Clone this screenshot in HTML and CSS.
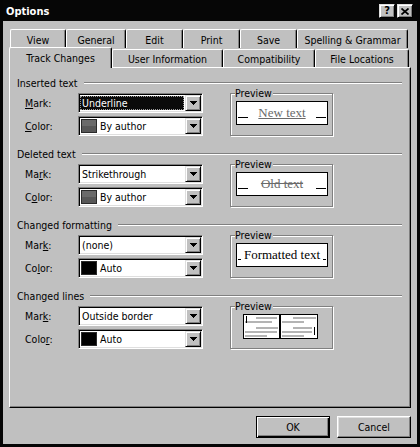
FILE: index.html
```html
<!DOCTYPE html>
<html>
<head>
<meta charset="utf-8">
<title>Options</title>
<link rel="stylesheet" href="styles.css">
</head>
<body>
<div class="window">
  <div class="titlebar">
    <span class="title">Options</span>
    <div class="caption-buttons">
      <span class="cap-btn">?</span>
      <span class="cap-btn"><svg width="8" height="7" viewBox="0 0 8 7"><path d="M0.5 0.5 L7.5 6.5 M7.5 0.5 L0.5 6.5" stroke="#000" stroke-width="1.7" fill="none"/></svg></span>
    </div>
  </div>
  <div class="client">
    <div class="tabstrip">
      <div class="tabrow back">
        <div class="tab">View</div>
        <div class="tab">General</div>
        <div class="tab">Edit</div>
        <div class="tab">Print</div>
        <div class="tab">Save</div>
        <div class="tab">Spelling &amp; Grammar</div>
      </div>
      <div class="tabrow front">
        <div class="tab active">Track Changes</div>
        <div class="tab">User Information</div>
        <div class="tab">Compatibility</div>
        <div class="tab">File Locations</div>
      </div>
    </div>

    <div class="panel">
      <section class="group">
        <div class="group-head"><span>Inserted text</span><span class="etch"></span></div>
        <div class="group-body">
          <div class="fields">
            <span class="lbl"><u>M</u>ark:</span>
            <div class="combo"><span class="value focused">Underline</span><span class="drop"><svg width="7" height="4"><rect x="0" y="0" width="7" height="1"/><rect x="1" y="1" width="5" height="1"/><rect x="2" y="2" width="3" height="1"/><rect x="3" y="3" width="1" height="1"/></svg></span></div>
            <span class="lbl"><u>C</u>olor:</span>
            <div class="combo"><span class="swatch author"></span><span class="value">By author</span><span class="drop"><svg width="7" height="4"><rect x="0" y="0" width="7" height="1"/><rect x="1" y="1" width="5" height="1"/><rect x="2" y="2" width="3" height="1"/><rect x="3" y="3" width="1" height="1"/></svg></span></div>
          </div>
          <div class="preview">
            <span class="preview-label">Preview</span>
            <div class="sample"><span class="tick"></span><span class="new-text">New text</span><span class="tick"></span></div>
          </div>
        </div>
      </section>

      <section class="group">
        <div class="group-head"><span>Deleted text</span><span class="etch"></span></div>
        <div class="group-body">
          <div class="fields">
            <span class="lbl">Ma<u>r</u>k:</span>
            <div class="combo"><span class="value">Strikethrough</span><span class="drop"><svg width="7" height="4"><rect x="0" y="0" width="7" height="1"/><rect x="1" y="1" width="5" height="1"/><rect x="2" y="2" width="3" height="1"/><rect x="3" y="3" width="1" height="1"/></svg></span></div>
            <span class="lbl">C<u>o</u>lor:</span>
            <div class="combo"><span class="swatch author"></span><span class="value">By author</span><span class="drop"><svg width="7" height="4"><rect x="0" y="0" width="7" height="1"/><rect x="1" y="1" width="5" height="1"/><rect x="2" y="2" width="3" height="1"/><rect x="3" y="3" width="1" height="1"/></svg></span></div>
          </div>
          <div class="preview">
            <span class="preview-label">Preview</span>
            <div class="sample"><span class="tick"></span><span class="old-text">Old text</span><span class="tick"></span></div>
          </div>
        </div>
      </section>

      <section class="group">
        <div class="group-head"><span>Changed formatting</span><span class="etch"></span></div>
        <div class="group-body">
          <div class="fields">
            <span class="lbl">Mar<u>k</u>:</span>
            <div class="combo"><span class="value">(none)</span><span class="drop"><svg width="7" height="4"><rect x="0" y="0" width="7" height="1"/><rect x="1" y="1" width="5" height="1"/><rect x="2" y="2" width="3" height="1"/><rect x="3" y="3" width="1" height="1"/></svg></span></div>
            <span class="lbl">Co<u>l</u>or:</span>
            <div class="combo"><span class="swatch auto"></span><span class="value">Auto</span><span class="drop"><svg width="7" height="4"><rect x="0" y="0" width="7" height="1"/><rect x="1" y="1" width="5" height="1"/><rect x="2" y="2" width="3" height="1"/><rect x="3" y="3" width="1" height="1"/></svg></span></div>
          </div>
          <div class="preview">
            <span class="preview-label">Preview</span>
            <div class="sample"><span class="tick short"></span><span class="fmt-text">Formatted text</span><span class="tick short"></span></div>
          </div>
        </div>
      </section>

      <section class="group">
        <div class="group-head"><span>Changed lines</span><span class="etch"></span></div>
        <div class="group-body">
          <div class="fields">
            <span class="lbl">Mar<u>k</u>:</span>
            <div class="combo"><span class="value">Outside border</span><span class="drop"><svg width="7" height="4"><rect x="0" y="0" width="7" height="1"/><rect x="1" y="1" width="5" height="1"/><rect x="2" y="2" width="3" height="1"/><rect x="3" y="3" width="1" height="1"/></svg></span></div>
            <span class="lbl">Colo<u>r</u>:</span>
            <div class="combo"><span class="swatch auto"></span><span class="value">Auto</span><span class="drop"><svg width="7" height="4"><rect x="0" y="0" width="7" height="1"/><rect x="1" y="1" width="5" height="1"/><rect x="2" y="2" width="3" height="1"/><rect x="3" y="3" width="1" height="1"/></svg></span></div>
          </div>
          <div class="preview centered">
            <span class="preview-label">Preview</span>
            <svg class="pages" width="75" height="25" viewBox="0 0 75 25">
              <rect x="0" y="0" width="75" height="25" fill="#fff"/>
              <g fill="#b4b4b4">
                <rect x="13" y="3" width="21" height="2"/>
                <rect x="2" y="7" width="27" height="2"/>
                <rect x="13" y="13" width="22" height="2"/>
                <rect x="2" y="17" width="32" height="2"/>
                <rect x="2" y="21" width="22" height="2"/>
                <rect x="50" y="3" width="23" height="2"/>
                <rect x="39" y="7" width="22" height="2"/>
                <rect x="50" y="13" width="19" height="2"/>
                <rect x="39" y="17" width="30" height="2"/>
                <rect x="39" y="21" width="22" height="2"/>
              </g>
              <rect x="3" y="2" width="1" height="7" fill="#000"/>
              <rect x="71" y="13" width="1" height="8" fill="#000"/>
              <rect x="36" y="0" width="2" height="25" fill="#000"/>
              <rect x="0.5" y="0.5" width="74" height="24" fill="none" stroke="#000"/>
            </svg>
          </div>
        </div>
      </section>
    </div>

    <div class="buttons">
      <button class="btn default">OK</button>
      <button class="btn">Cancel</button>
    </div>
  </div>
</div>
</body>
</html>
```
FILE: styles.css
```css
* { box-sizing: border-box; }

html, body {
  margin: 0;
  padding: 0;
}

body {
  width: 420px;
  height: 447px;
  background: #c0c0c0;
  font-family: "DejaVu Sans Condensed", "DejaVu Sans", sans-serif;
  font-stretch: condensed;
  font-size: 10.5px;
  color: #000;
}

.window {
  width: 420px;
  height: 447px;
  border: 3px solid #050505;
  border-top: 0;
  display: flex;
  flex-direction: column;
  background: #c0c0c0;
}

/* title bar */
.titlebar {
  height: 21px;
  flex: none;
  background: #060606;
  color: #fff;
  display: flex;
  align-items: center;
  justify-content: space-between;
  padding: 1px 4px 0 3px;
}

.title {
  font-weight: bold;
  font-size: 11px;
}

.caption-buttons {
  display: flex;
  gap: 2px;
}

.cap-btn {
  width: 16px;
  height: 14px;
  background: #c0c0c0;
  border: 1px solid;
  border-color: #dfdfdf #000 #000 #dfdfdf;
  box-shadow: inset 1px 1px 0 #fff, inset -1px -1px 0 #808080;
  display: flex;
  align-items: center;
  justify-content: center;
  color: #000;
  font-weight: bold;
  font-size: 11px;
  line-height: 12px;
}

/* client area */
.client {
  flex: 1;
  padding: 8px 6px 6px 6px;
  display: flex;
  flex-direction: column;
}

.tabrow {
  display: flex;
  height: 19px;
}

.tabrow.back {
  margin-left: 1px;
}

.tab {
  height: 19px;
  background: #c0c0c0;
  border-top: 1px solid #fff;
  border-left: 1px solid #fff;
  border-right: 1px solid #000;
  box-shadow: inset -1px 0 0 #808080;
  border-radius: 2px 2px 0 0;
  text-align: center;
  padding-top: 2px;
  line-height: 16px;
  white-space: nowrap;
}

.back .tab:nth-child(1) { width: 56px; }
.back .tab:nth-child(2) { width: 60px; }
.back .tab:nth-child(3) { width: 57px; }
.back .tab:nth-child(4) { width: 57px; }
.back .tab:nth-child(5) { width: 57px; }
.back .tab:nth-child(6) { width: 111px; }

.tabrow.front {
  align-items: flex-end;
}

.front .tab {
  height: 18px;
  padding-top: 1px;
}

.front .tab:nth-child(1) { width: 103px; }
.front .tab:nth-child(2) { width: 111px; }
.front .tab:nth-child(3) { width: 92px; }
.front .tab:nth-child(4) { width: 94px; }

.front .tab.active {
  height: 21px;
  margin-bottom: -1px;
  position: relative;
  z-index: 1;
  padding-top: 2px;
}

/* panel */
.panel {
  height: 341px;
  flex: none;
  border: 1px solid;
  border-color: #fff #000 #000 #fff;
  box-shadow: inset -1px -1px 0 #808080;
  padding: 8px 8px 0 7px;
}

.group {
  height: 71px;
}

.group-head {
  display: flex;
  align-items: center;
  gap: 6px;
  height: 14px;
  line-height: 14px;
  margin-bottom: 3px;
}

.etch {
  flex: 1;
  height: 2px;
  border-top: 1px solid #808080;
  border-bottom: 1px solid #fff;
}

.group-body {
  display: flex;
  padding-left: 8px;
}

.fields {
  display: grid;
  grid-template-columns: 53px 125px;
  grid-auto-rows: 20px;
  row-gap: 3px;
  align-items: center;
}

.lbl {
  line-height: 14px;
}

/* combo box */
.combo {
  height: 20px;
  background: #fff;
  border: 1px solid;
  border-color: #808080 #fff #fff #808080;
  box-shadow: inset 1px 1px 0 #000, inset -1px -1px 0 #dfdfdf;
  padding: 1px;
  display: flex;
  align-items: stretch;
}

.value {
  flex: 1;
  margin: 1px 1px 1px 0;
  padding-left: 2px;
  line-height: 14px;
  white-space: nowrap;
}

.value.focused {
  background: #0a0a0a;
  color: #fff;
  outline: 1px dotted #9a9a9a;
  outline-offset: -1px;
}

.swatch {
  width: 16px;
  margin: 1px 0 1px 1px;
  border: 1px solid #2a2a2a;
}

.swatch + .value {
  padding-left: 3px;
}

.swatch.author {
  background: linear-gradient(#6a6a6a 50%, #575757 50%);
}

.swatch.auto {
  background: #000;
}

.drop {
  width: 16px;
  background: #c0c0c0;
  border: 1px solid;
  border-color: #dfdfdf #000 #000 #dfdfdf;
  box-shadow: inset 1px 1px 0 #fff, inset -1px -1px 0 #808080;
  display: flex;
  align-items: center;
  justify-content: center;
}

.drop svg {
  fill: #000;
  display: block;
}

/* preview group */
.preview {
  margin-left: 27px;
  width: 103px;
  height: 43px;
  border: 1px solid #808080;
  box-shadow: inset 1px 1px 0 #fff, 1px 1px 0 #fff;
  position: relative;
  padding: 7px 0 0 5px;
}

.preview.centered {
  padding: 7px 2px 0 0;
  display: flex;
  justify-content: center;
  align-items: flex-start;
}

.preview-label {
  position: absolute;
  top: -7px;
  left: 4px;
  background: #c0c0c0;
  padding-right: 1px;
  line-height: 12px;
}

.sample {
  width: 92px;
  height: 24px;
  border: 1px solid #000;
  background: #fff;
  display: flex;
  align-items: center;
  justify-content: space-between;
  padding: 0 1px;
  font-family: "Liberation Serif", "Times New Roman", serif;
  font-size: 13px;
}

.tick {
  width: 10px;
  height: 1px;
  background: #000;
  align-self: flex-end;
  margin-bottom: 6px;
}

.tick.short {
  width: 3px;
}

.new-text {
  color: #6a6a6a;
  text-decoration: underline;
}

.old-text {
  color: #6a6a6a;
  text-decoration: line-through;
}

.fmt-text {
  color: #000;
}

.pages {
  display: block;
}

/* dialog buttons */
.buttons {
  display: flex;
  justify-content: flex-end;
  gap: 7px;
  margin-top: 8px;
}

.btn {
  width: 74px;
  height: 22px;
  padding: 0;
  font: inherit;
  color: #000;
  background: #c0c0c0;
  border: 1px solid;
  border-color: #fff #000 #000 #fff;
  box-shadow: inset -1px -1px 0 #808080, inset 1px 1px 0 #dfdfdf;
}

.btn.default {
  border-color: #000;
  box-shadow: inset 1px 1px 0 #fff, inset -1px -1px 0 #000, inset -2px -2px 0 #808080;
}
```
